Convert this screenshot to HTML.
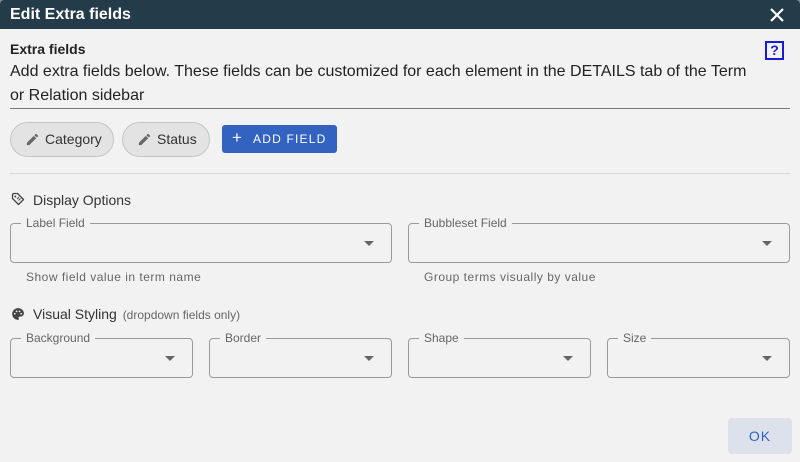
<!DOCTYPE html>
<html><head><style>
*{box-sizing:border-box;margin:0;padding:0}
body{width:800px;height:462px;background:#888;font-family:"Liberation Sans",sans-serif;overflow:hidden;position:relative}
.dlg{position:absolute;left:0;top:0;width:800px;height:462px;background:#f2f2f2;border-radius:4px 4px 0 0;overflow:hidden}
.hd{height:29px;background:#243b4a;color:#fff;font-weight:bold;font-size:16px;line-height:29px;padding-left:10px;position:relative}
.abs{position:absolute}
.chip{position:absolute;top:122px;height:35px;border:1px solid #c4c4c4;border-radius:18px;background:#e3e3e3;font-size:14px;color:#333;line-height:33px}
.fld{position:absolute;height:40px;border:1px solid #9a9a9a;border-radius:4px}
.fld .lb{position:absolute;top:-8px;left:10px;padding:0 5px;background:#f2f2f2;font-size:12px;color:#666;line-height:14px}
.fld .ar{position:absolute;right:17px;top:17px;width:0;height:0;border-left:5px solid transparent;border-right:5px solid transparent;border-top:5px solid #666}
.help{position:absolute;font-size:12px;color:#666;letter-spacing:.5px}
</style></head><body>
<div class="dlg">
<div class="hd">Edit Extra fields
<svg class="abs" style="left:769px;top:7px" width="16" height="16" viewBox="0 0 16 16"><path d="M2 2L14 14M14 2L2 14" stroke="#fff" stroke-width="2.2"/></svg>
</div>
<div class="abs" style="left:10px;top:41px;font-weight:bold;font-size:14px;color:#222">Extra fields</div>
<div class="abs" style="left:765px;top:41px;width:19px;height:19px;border:2px solid #1a1adb;color:#1a1adb;font-weight:bold;font-size:14px;line-height:15px;text-align:center">?</div>
<div class="abs" style="left:10px;top:60px;width:745px;font-size:16px;line-height:24px;color:#222">Add extra fields below. These fields can be customized for each element in the DETAILS tab of the Term or Relation sidebar</div>
<div class="abs" style="left:10px;top:108px;width:780px;height:1px;background:#777"></div>
<div class="chip" style="left:10px;width:104px"><svg class="abs" style="left:14px;top:9px" width="15" height="15" viewBox="0 0 24 24"><path fill="#666" d="M3 17.25V21h3.75L17.81 9.94l-3.75-3.75L3 17.25zM20.71 7.04a1 1 0 0 0 0-1.41l-2.34-2.34a1 1 0 0 0-1.41 0l-1.83 1.83 3.75 3.75 1.83-1.83z"/></svg><span class="abs" style="left:34px">Category</span></div>
<div class="chip" style="left:122px;width:88px"><svg class="abs" style="left:14px;top:9px" width="15" height="15" viewBox="0 0 24 24"><path fill="#666" d="M3 17.25V21h3.75L17.81 9.94l-3.75-3.75L3 17.25zM20.71 7.04a1 1 0 0 0 0-1.41l-2.34-2.34a1 1 0 0 0-1.41 0l-1.83 1.83 3.75 3.75 1.83-1.83z"/></svg><span class="abs" style="left:34px">Status</span></div>
<div class="abs" style="left:222px;top:125px;width:115px;height:28px;background:#3263c0;border-radius:3px;color:#fff;font-size:12px;letter-spacing:1.2px;line-height:28px"><span class="abs" style="left:10px;font-size:17px;top:-1px">+</span><span class="abs" style="left:31px">ADD FIELD</span></div>
<div class="abs" style="left:10px;top:173px;width:780px;height:1px;background:#d8d8d8"></div>
<svg class="abs" style="left:11px;top:192px" width="14" height="14" viewBox="0 0 14 14"><path d="M1.5 2.5v4l6 6 5-5-6-6h-4z" fill="none" stroke="#444" stroke-width="1.3" stroke-linejoin="round"/><circle cx="4.3" cy="4.5" r="1" fill="#444"/><path d="M6 7l2-2M7.5 8.5l2-2" stroke="#444" stroke-width="1"/></svg>
<div class="abs" style="left:33px;top:192px;font-size:14px;color:#333">Display Options</div>
<div class="fld" style="left:10px;top:223px;width:382px"><span class="lb">Label Field</span><span class="ar"></span></div>
<div class="fld" style="left:408px;top:223px;width:382px"><span class="lb">Bubbleset Field</span><span class="ar"></span></div>
<div class="help" style="left:26px;top:270px">Show field value in term name</div>
<div class="help" style="left:424px;top:270px">Group terms visually by value</div>
<svg class="abs" style="left:11px;top:307px" width="14" height="14" viewBox="0 0 24 24"><path fill="#444" d="M12 2C6.5 2 2 6.5 2 12s4.5 10 10 10c.9 0 1.7-.7 1.7-1.7 0-.4-.2-.8-.4-1.1-.3-.3-.4-.7-.4-1.1 0-.9.7-1.7 1.700-1.7h2c3.1 0 5.6-2.5 5.6-5.6C22 6 17.5 2 12 2zM6.5 13a1.5 1.5 0 1 1 0-3 1.5 1.5 0 0 1 0 3zm3-4a1.5 1.5 0 1 1 0-3 1.5 1.5 0 0 1 0 3zm5 0a1.5 1.5 0 1 1 0-3 1.5 1.5 0 0 1 0 3zm3 4a1.5 1.5 0 1 1 0-3 1.5 1.5 0 0 1 0 3z"/></svg>
<div class="abs" style="left:33px;top:306px;font-size:14px;color:#333">Visual Styling <span style="font-size:12px;color:#666;margin-left:2px">(dropdown fields only)</span></div>
<div class="fld" style="left:10px;top:338px;width:183px"><span class="lb">Background</span><span class="ar"></span></div>
<div class="fld" style="left:209px;top:338px;width:183px"><span class="lb">Border</span><span class="ar"></span></div>
<div class="fld" style="left:408px;top:338px;width:183px"><span class="lb">Shape</span><span class="ar"></span></div>
<div class="fld" style="left:607px;top:338px;width:183px"><span class="lb">Size</span><span class="ar"></span></div>
<div class="abs" style="left:728px;top:418px;width:64px;height:36px;background:#dce1ec;border-radius:4px;color:#3263c0;font-size:14px;letter-spacing:1px;text-align:center;line-height:36px">OK</div>
</div>
</body></html>
